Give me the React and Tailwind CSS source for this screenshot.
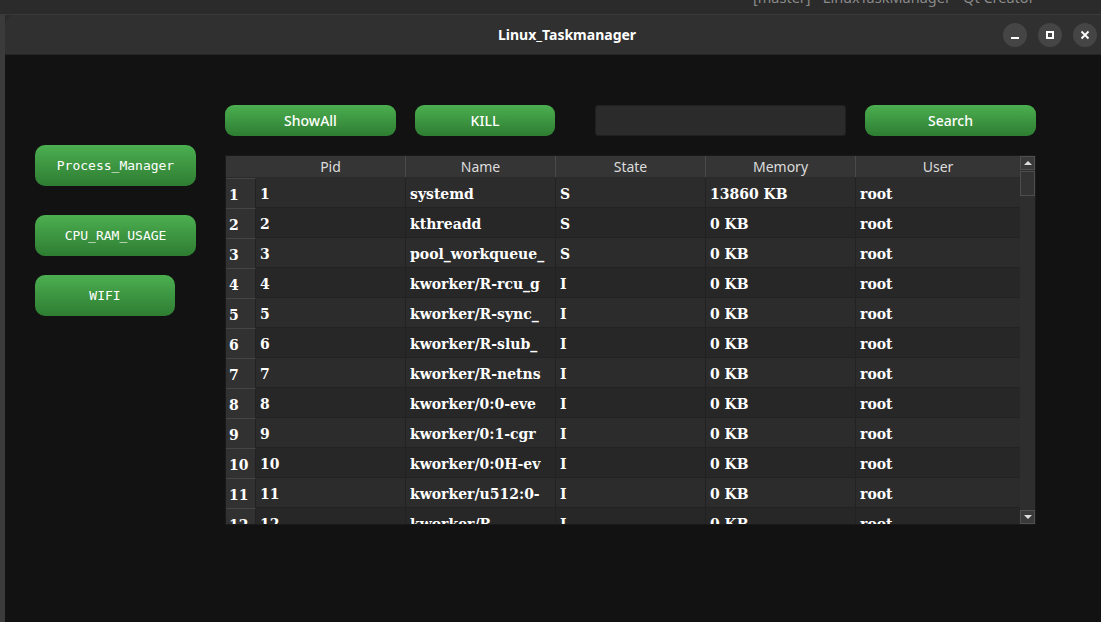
import React from 'react';

const rows = [
  ['1', 'systemd', 'S', '13860 KB', 'root'],
  ['2', 'kthreadd', 'S', '0 KB', 'root'],
  ['3', 'pool_workqueue_', 'S', '0 KB', 'root'],
  ['4', 'kworker/R-rcu_g', 'I', '0 KB', 'root'],
  ['5', 'kworker/R-sync_', 'I', '0 KB', 'root'],
  ['6', 'kworker/R-slub_', 'I', '0 KB', 'root'],
  ['7', 'kworker/R-netns', 'I', '0 KB', 'root'],
  ['8', 'kworker/0:0-eve', 'I', '0 KB', 'root'],
  ['9', 'kworker/0:1-cgr', 'I', '0 KB', 'root'],
  ['10', 'kworker/0:0H-ev', 'I', '0 KB', 'root'],
  ['11', 'kworker/u512:0-', 'I', '0 KB', 'root'],
  ['12', 'kworker/R-', 'I', '0 KB', 'root'],
];

const greenBtn =
  'h-[41px] rounded-[10px] bg-gradient-to-b from-[#4caf50] to-[#2e7d32] text-white text-[13px] flex items-center justify-center';

const topBtn =
  'h-[31px] rounded-[9px] bg-gradient-to-b from-[#4caf50] to-[#2e7d32] text-white text-[14px] font-medium flex items-center justify-center';

const cell = 'shrink-0 border-r border-b border-[#222] flex items-center pl-[4px] pt-[3px]';

const App = () => {
  return (
    <div className="w-[1101px] h-[622px] bg-[#2b2b2b] flex flex-col overflow-hidden" style={{ fontFamily: '"Noto Sans", sans-serif' }}>
      {/* background window strip */}
      <div className="h-[15px] shrink-0 border-b border-[#3a3a3a] overflow-hidden">
        <div className="pl-[753px] -mt-[13px] text-[14.5px] text-[#8a8a8a] whitespace-nowrap">
          [master] - LinuxTaskManager - Qt Creator
        </div>
      </div>

      <div className="flex-1 flex min-h-0">
        <div className="w-[5px] shrink-0 bg-[#3b3b3b]" />

        <div className="flex-1 flex flex-col rounded-tl-[10px] overflow-hidden">
          {/* title bar */}
          <div className="h-[40px] shrink-0 bg-[#303030] flex items-center border-b border-[#262626]">
            <div className="pl-[493px] text-[14px] font-bold text-white">Linux_Taskmanager</div>
            <div className="ml-auto pr-[4px] flex gap-[11px]">
              <div className="w-[24px] h-[24px] rounded-full bg-[#454545] flex items-center justify-center">
                <div className="w-[8px] h-[2px] bg-white mt-[6px]" />
              </div>
              <div className="w-[24px] h-[24px] rounded-full bg-[#454545] flex items-center justify-center">
                <div className="w-[8px] h-[8px] border-2 border-white" />
              </div>
              <div className="w-[24px] h-[24px] rounded-full bg-[#454545] flex items-center justify-center">
                <svg width="10" height="10" viewBox="0 0 10 10">
                  <path d="M1.5 1.5 L8.5 8.5 M8.5 1.5 L1.5 8.5" stroke="white" strokeWidth="1.8" />
                </svg>
              </div>
            </div>
          </div>

          {/* content */}
          <div className="flex-1 bg-[#121212] flex pl-[30px]">
            <div className="w-[161px] pt-[90px] flex flex-col" style={{ fontFamily: '"DejaVu Sans Mono", monospace' }}>
              <div className={`${greenBtn} w-[161px]`}>Process_Manager</div>
              <div className={`${greenBtn} w-[161px] mt-[29px]`}>CPU_RAM_USAGE</div>
              <div className={`${greenBtn} w-[140px] mt-[19px]`}>WIFI</div>
            </div>

            <div className="ml-[29px] pt-[50px] w-[811px]">
              <div className="flex items-center">
                <div className={`${topBtn} w-[171px]`}>ShowAll</div>
                <div className={`${topBtn} w-[140px] ml-[19px]`}>KILL</div>
                <div className="w-[251px] h-[31px] ml-[40px] bg-[#2b2b2b] border border-[#202020] rounded-[3px]" />
                <div className={`${topBtn} w-[171px] ml-[19px]`}>Search</div>
              </div>

              {/* table */}
              <div className="mt-[19px] h-[370px] flex border border-[#1a1a1a] bg-[#262626]">
                <div className="flex-1 flex flex-col min-w-0">
                  <div className="h-[22px] shrink-0 flex bg-[#353535] border-b border-[#2a2a2a] text-[14px] text-[#dcdcdc]">
                    <div className="w-[30px]" />
                    <div className="w-[150px] border-r border-[#4a4a4a] flex items-center justify-center">Pid</div>
                    <div className="w-[150px] border-r border-[#4a4a4a] flex items-center justify-center">Name</div>
                    <div className="w-[150px] border-r border-[#4a4a4a] flex items-center justify-center">State</div>
                    <div className="w-[150px] border-r border-[#4a4a4a] flex items-center justify-center">Memory</div>
                    <div className="flex-1 flex items-center justify-center">User</div>
                  </div>
                  <div className="flex-1 overflow-hidden" style={{ fontFamily: '"DejaVu Serif", serif' }}>
                    {rows.map((r, i) => (
                      <div key={i} className={`h-[30px] flex text-[14px] font-bold text-white ${i % 2 === 0 ? 'bg-[#2c2c2c]' : 'bg-[#272727]'}`}>
                        <div className="w-[30px] shrink-0 bg-[#313131] border-t border-[#454545] border-r border-r-[#222] flex items-center pl-[3px] pt-[3px]">
                          {i + 1}
                        </div>
                        <div className={`${cell} w-[150px]`}>{r[0]}</div>
                        <div className={`${cell} w-[150px] whitespace-nowrap overflow-hidden`}>{r[1]}</div>
                        <div className={`${cell} w-[150px]`}>{r[2]}</div>
                        <div className={`${cell} w-[150px]`}>{r[3]}</div>
                        <div className="flex-1 border-b border-[#222] flex items-center pl-[4px] pt-[3px]">{r[4]}</div>
                      </div>
                    ))}
                  </div>
                </div>

                {/* scrollbar */}
                <div className="w-[15px] shrink-0 bg-[#2e2e2e] flex flex-col">
                  <div className="h-[14px] bg-[#3a3a3a] border border-[#505050] flex items-center justify-center">
                    <div className="w-0 h-0 border-l-[4px] border-r-[4px] border-b-[4px] border-l-transparent border-r-transparent border-b-[#dddddd]" />
                  </div>
                  <div className="h-[25px] mt-[1px] bg-[#333] border border-[#4d4d4d]" />
                  <div className="flex-1" />
                  <div className="h-[14px] bg-[#3a3a3a] border border-[#505050] flex items-center justify-center">
                    <div className="w-0 h-0 border-l-[4px] border-r-[4px] border-t-[4px] border-l-transparent border-r-transparent border-t-[#dddddd]" />
                  </div>
                </div>
              </div>
            </div>
          </div>
        </div>
      </div>
    </div>
  );
};

export default App;
